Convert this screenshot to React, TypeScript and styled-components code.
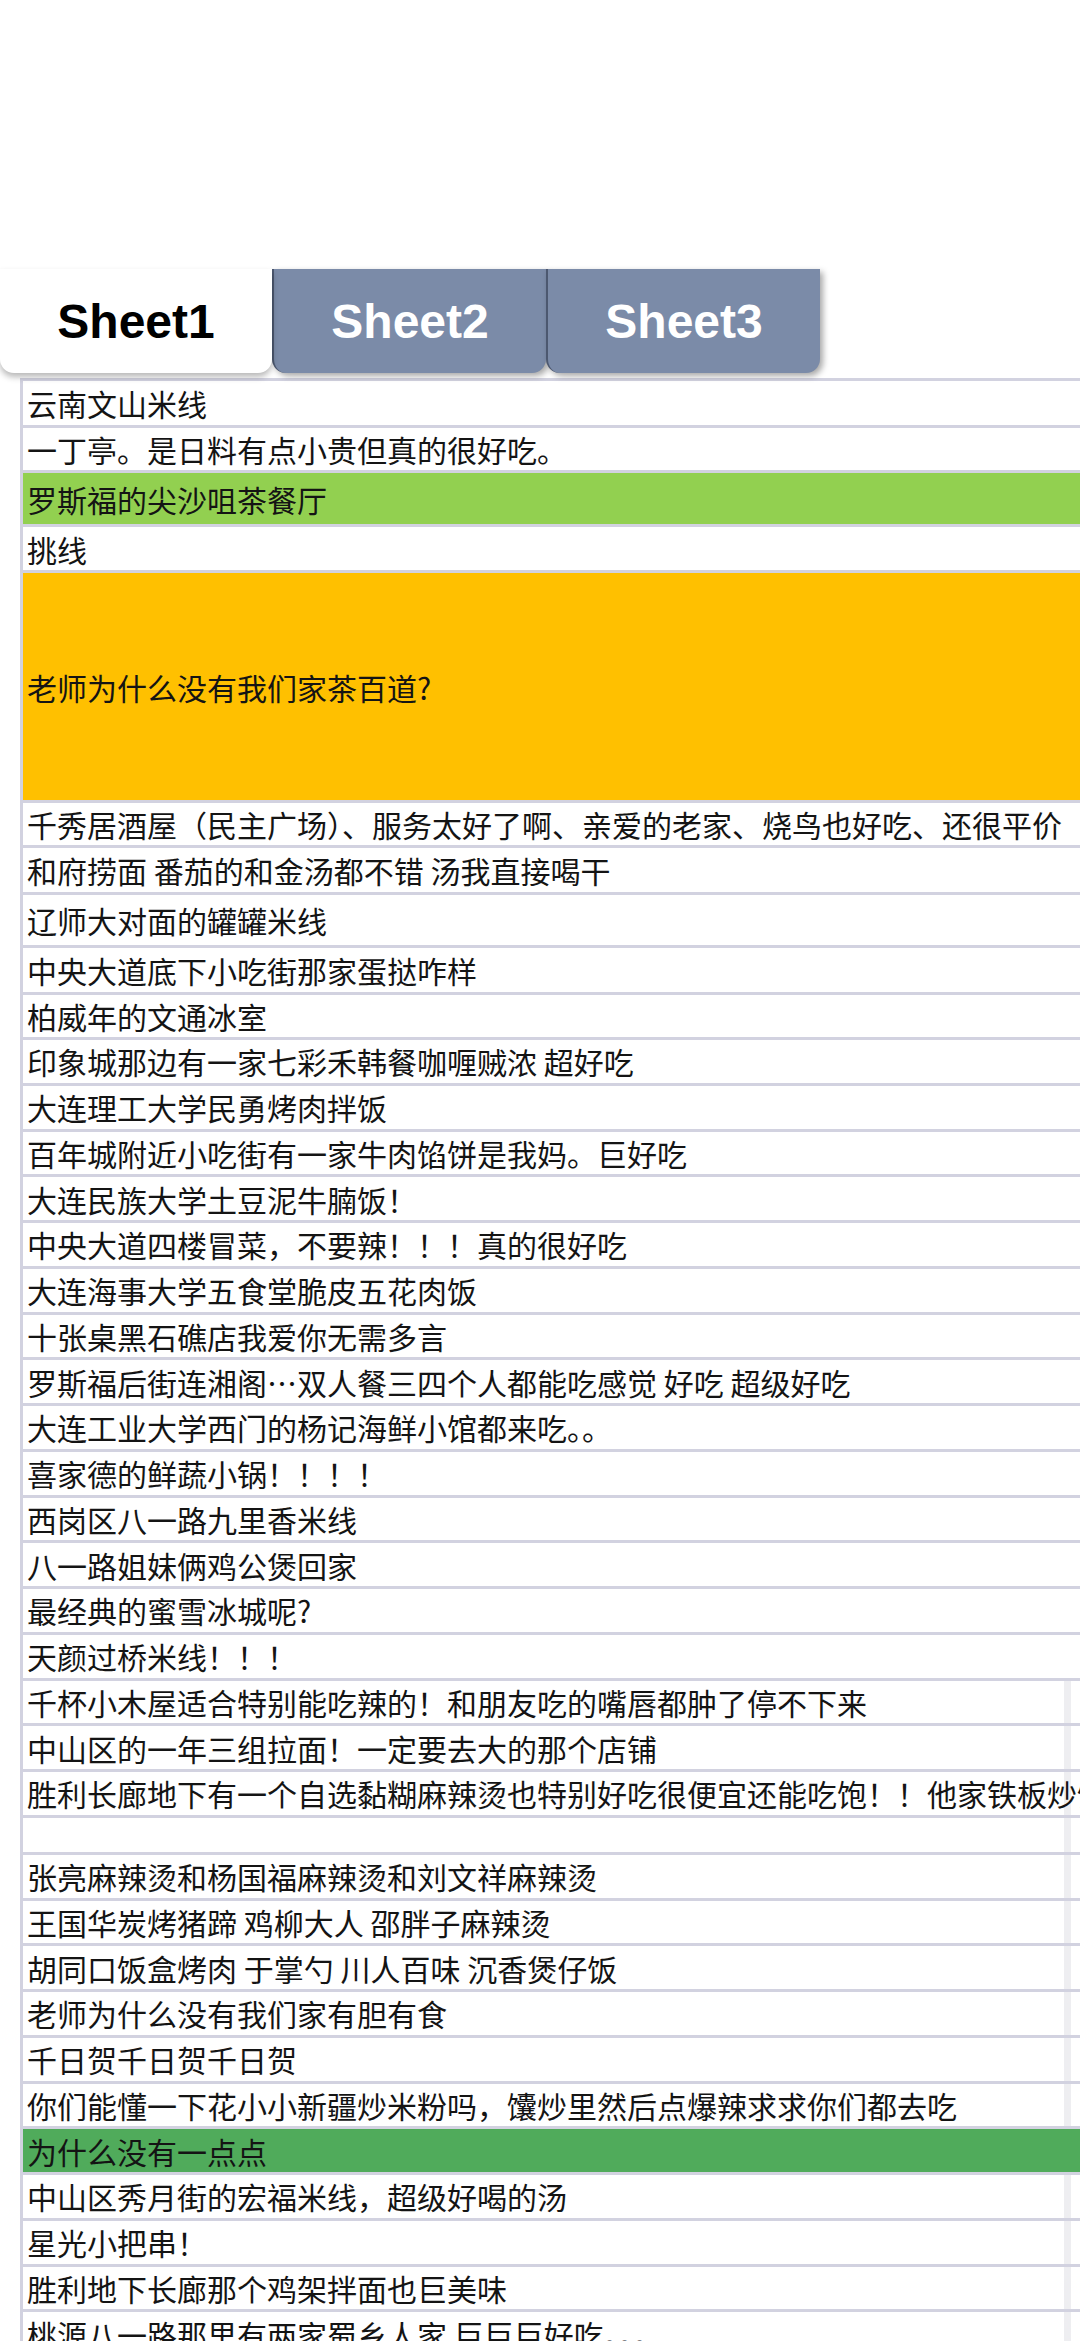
import React from "react";
import styled, { createGlobalStyle, css } from "styled-components";

type Tone = "plain" | "lime" | "amber" | "leaf";

type Row = {
  text: string;
  tone?: Tone;
  pitch?: number; // row height incl. bottom gridline
  colLine?: boolean;
};

const GlobalStyle = createGlobalStyle`
  html, body {
    margin: 0;
    padding: 0;
    background: #ffffff;
    overflow-x: hidden;
  }
  body {
    font-family: "Noto Sans CJK SC", "Noto Sans", sans-serif;
  }
`;

const tones: Record<Tone, string> = {
  plain: "#ffffff",
  lime: "#92d050",
  amber: "#ffc000",
  leaf: "#50ab5b",
};

const rows: Row[] = [
  { text: "云南文山米线", pitch: 47 },
  { text: "一丁亭。是日料有点小贵但真的很好吃。", pitch: 45 },
  { text: "罗斯福的尖沙咀茶餐厅", tone: "lime", pitch: 54 },
  { text: "挑线", pitch: 46 },
  { text: "老师为什么没有我们家茶百道?", tone: "amber", pitch: 230 },
  { text: "千秀居酒屋（民主广场）、服务太好了啊、亲爱的老家、烧鸟也好吃、还很平价", pitch: 45 },
  { text: "和府捞面 番茄的和金汤都不错 汤我直接喝干", pitch: 47 },
  { text: "辽师大对面的罐罐米线", pitch: 53 },
  { text: "中央大道底下小吃街那家蛋挞咋样", pitch: 47 },
  { text: "柏威年的文通冰室", pitch: 45 },
  { text: "印象城那边有一家七彩禾韩餐咖喱贼浓 超好吃" },
  { text: "大连理工大学民勇烤肉拌饭" },
  { text: "百年城附近小吃街有一家牛肉馅饼是我妈。巨好吃" },
  { text: "大连民族大学土豆泥牛腩饭！" },
  { text: "中央大道四楼冒菜，不要辣！！！真的很好吃" },
  { text: "大连海事大学五食堂脆皮五花肉饭" },
  { text: "十张桌黑石礁店我爱你无需多言" },
  { text: "罗斯福后街连湘阁…双人餐三四个人都能吃感觉 好吃 超级好吃" },
  { text: "大连工业大学西门的杨记海鲜小馆都来吃。。" },
  { text: "喜家德的鲜蔬小锅！！！！" },
  { text: "西岗区八一路九里香米线" },
  { text: "八一路姐妹俩鸡公煲回家" },
  { text: "最经典的蜜雪冰城呢?" },
  { text: "天颜过桥米线！！！" },
  { text: "千杯小木屋适合特别能吃辣的！和朋友吃的嘴唇都肿了停不下来", colLine: true },
  { text: "中山区的一年三组拉面！一定要去大的那个店铺", colLine: true },
  { text: "胜利长廊地下有一个自选黏糊麻辣烫也特别好吃很便宜还能吃饱！！他家铁板炒饭", colLine: true },
  { text: "", pitch: 37, colLine: true },
  { text: "张亮麻辣烫和杨国福麻辣烫和刘文祥麻辣烫", colLine: true },
  { text: "王国华炭烤猪蹄 鸡柳大人 邵胖子麻辣烫", colLine: true },
  { text: "胡同口饭盒烤肉 于掌勺 川人百味 沉香煲仔饭", colLine: true },
  { text: "老师为什么没有我们家有胆有食", colLine: true },
  { text: "千日贺千日贺千日贺", colLine: true },
  { text: "你们能懂一下花小小新疆炒米粉吗，馕炒里然后点爆辣求求你们都去吃", colLine: true },
  { text: "为什么没有一点点", tone: "leaf" },
  { text: "中山区秀月街的宏福米线，超级好喝的汤", colLine: true },
  { text: "星光小把串！", colLine: true },
  { text: "胜利地下长廊那个鸡架拌面也巨美味", colLine: true },
  { text: "桃源八一路那里有两家蜀乡人家 巨巨巨好吃。。。", colLine: true },
];

const Page = styled.div`
  width: 1080px;
  min-height: 2341px;
  overflow: hidden;
`;

const TopSpace = styled.div`
  height: 269px;
`;

const TabBar = styled.div`
  display: flex;
  height: 104px;
`;

const Tab = styled.div<{ $active?: boolean }>`
  width: 272px;
  display: flex;
  align-items: center;
  justify-content: center;
  border-radius: 0 0 14px 14px;
  font-family: "Liberation Sans", Arial, sans-serif;
  font-weight: 700;
  font-size: 48px;
  ${({ $active }) =>
    $active
      ? css`
          background: #ffffff;
          color: #000000;
          box-shadow: 0 4px 6px rgba(0, 0, 0, 0.28);
          position: relative;
          z-index: 2;
        `
      : css`
          background: #7b8ba8;
          color: #ffffff;
          border-left: 2px solid #4c5870;
          box-shadow: 3px 3px 6px rgba(0, 0, 0, 0.35);
        `}
`;

const Sheet = styled.div`
  margin-top: 5px;
  margin-left: 20px;
  border-top: 3px solid #d2d2e0;
  border-left: 3px solid #d2d2e0;
`;

const Cell = styled.div<{ $tone: Tone; $pitch: number; $colLine?: boolean }>`
  display: flex;
  align-items: center;
  box-sizing: border-box;
  height: ${({ $pitch }) => $pitch}px;
  padding: 0 0 0 4px;
  border-bottom: 3px solid #d2d2e0;
  background-color: ${({ $tone }) => tones[$tone]};
  ${({ $colLine }) =>
    $colLine &&
    css`
      background-image: linear-gradient(
        to right,
        transparent 1041px,
        #eeeef1 1041px,
        #eeeef1 1048px,
        transparent 1048px
      );
    `}
  font-size: 30px;
  line-height: 1;
  color: #141414;
  white-space: nowrap;
  overflow: hidden;
`;

export default function App() {
  return (
    <Page>
      <GlobalStyle />
      <TopSpace />
      <TabBar>
        <Tab $active>Sheet1</Tab>
        <Tab>Sheet2</Tab>
        <Tab>Sheet3</Tab>
      </TabBar>
      <Sheet>
        {rows.map((row, i) => (
          <Cell
            key={i}
            $tone={row.tone ?? "plain"}
            $pitch={row.pitch ?? 45.75}
            $colLine={row.colLine}
          >
            {row.text}
          </Cell>
        ))}
      </Sheet>
    </Page>
  );
}
